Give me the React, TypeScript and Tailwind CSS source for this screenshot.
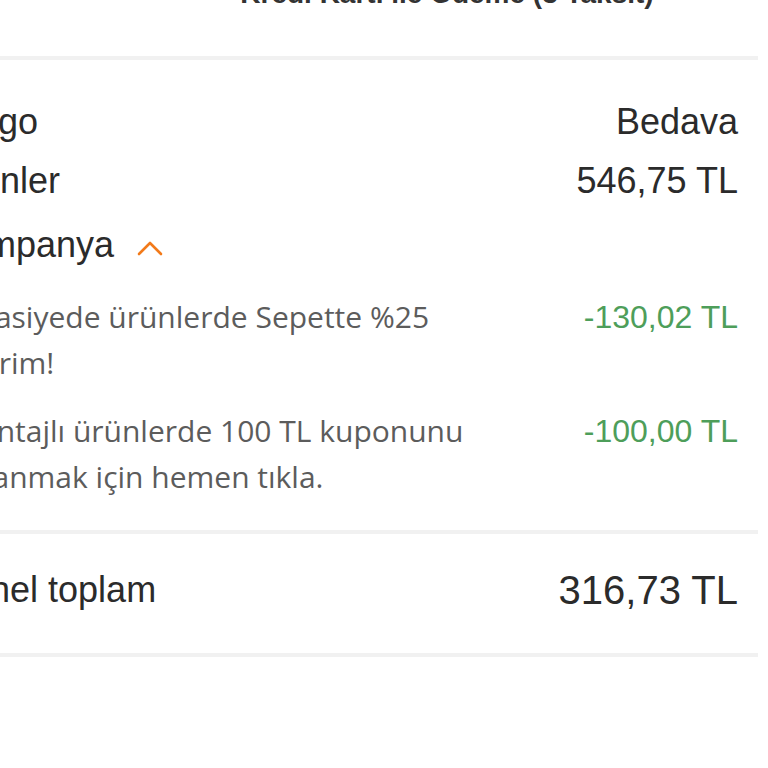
const sans = { fontFamily: '"Liberation Sans", Arial, sans-serif' };
const open = { fontFamily: '"Open Sans", "Noto Sans", sans-serif' };

export default function App() {
  const rows = [
    { label: "Kargo", value: "Bedava" },
    { label: "Ürünler", value: "546,75 TL" },
  ];

  const campaigns = [
    { text: "Kırtasiyede ürünlerde Sepette %25 İndirim!", amount: "-130,02 TL" },
    { text: "Avantajlı ürünlerde 100 TL kuponunu kazanmak için hemen tıkla.", amount: "-100,00 TL" },
  ];

  return (
    <div className="w-[768px] h-[768px] overflow-hidden bg-white" style={sans}>
      <div className="-ml-[58px] w-[816px]">
        {/* Payment header */}
        <div className="h-[56px] overflow-hidden flex justify-center pl-[194px]">
          <p className="-mt-[23px] text-[28px] leading-[34px] font-bold text-[#333] whitespace-nowrap">
            Kredi Kartı ile Ödeme (3 Taksit)
          </p>
        </div>
        <div className="h-[4px] w-[816px] bg-[#f1f1f1]" />

        {/* Summary */}
        <div className="pt-[40px] pr-[20px] flex flex-col">
          <div className="flex flex-col gap-[15px]">
            {rows.map((r) => (
              <div key={r.label} className="flex justify-between items-center text-[36px] leading-[44px] text-[#2b2b2b]">
                <span>{r.label}</span>
                <span>{r.value}</span>
              </div>
            ))}
          </div>

          <div className="mt-[20px] flex items-center gap-[23px] text-[36px] leading-[44px] text-[#2b2b2b]">
            <span>Kampanya</span>
            <svg width="26" height="16" viewBox="0 0 26 16" fill="none" className="mt-[6px]">
              <polyline points="2,14 13,3 24,14" stroke="#f27a1a" strokeWidth="2.6" strokeLinecap="round" strokeLinejoin="round" />
            </svg>
          </div>

          <div className="mt-[27px] flex flex-col gap-[22px]">
            {campaigns.map((c) => (
              <div key={c.amount} className="flex justify-between items-start">
                <p className="ml-[4px] w-[560px] text-[30px] leading-[46px] text-[#5c5c5c]" style={open}>
                  {c.text}
                </p>
                <span className="text-[32px] leading-[46px] text-[#4e9e5a]">{c.amount}</span>
              </div>
            ))}
          </div>
        </div>

        <div className="mt-[30px] h-[4px] w-[816px] bg-[#f1f1f1]" />

        <div className="pr-[20px] pb-[8px] h-[119px] flex justify-between items-center text-[#2b2b2b]">
          <span className="text-[36px]">Genel toplam</span>
          <span className="text-[40px]">316,73 TL</span>
        </div>

        <div className="h-[4px] w-[816px] bg-[#f1f1f1]" />
      </div>
    </div>
  );
}
